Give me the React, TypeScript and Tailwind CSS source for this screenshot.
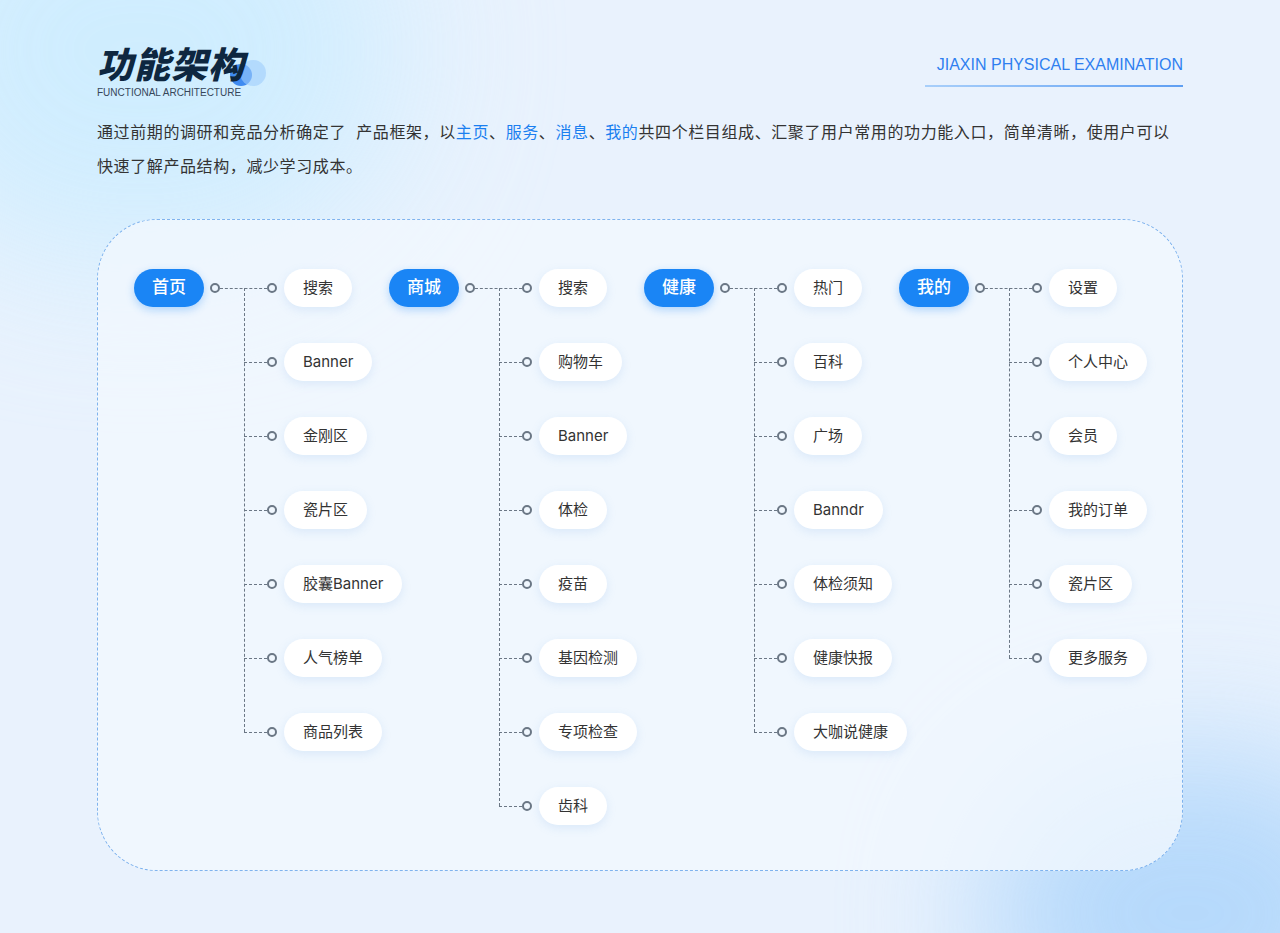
import React from "react";

const cols: { h: string; items: string[] }[] = [
  { h: "首页", items: ["搜索", "Banner", "金刚区", "瓷片区", "胶囊Banner", "人气榜单", "商品列表"] },
  { h: "商城", items: ["搜索", "购物车", "Banner", "体检", "疫苗", "基因检测", "专项检查", "齿科"] },
  { h: "健康", items: ["热门", "百科", "广场", "Banndr", "体检须知", "健康快报", "大咖说健康"] },
  { h: "我的", items: ["设置", "个人中心", "会员", "我的订单", "瓷片区", "更多服务"] },
];

const Dot = () => <div className="w-[10px] h-[10px] rounded-full border-2 border-[#6b7785] shrink-0" />;
const Dash = ({ w }: { w: string }) => <div className={`${w} shrink-0 border-t border-dashed border-[#6b7785]`} />;
const Pill = ({ t }: { t: string }) => (
  <div className="h-[38px] px-[19px] flex items-center rounded-full bg-white text-[15px] text-[#333] shadow-[0_3px_10px_rgba(120,170,230,0.18)] whitespace-nowrap">{t}</div>
);

export default function App() {
  return (
    <div className="relative w-[1280px] h-[933px] overflow-hidden bg-[#e9f2fd]" style={{ fontFamily: "Inter, 'Noto Sans CJK SC', sans-serif" }}>
      <div className="absolute -left-[120px] -top-[160px] w-[520px] h-[420px] rounded-full bg-[#c9ecff] blur-[80px] opacity-80" />
      <div className="absolute -right-[120px] -bottom-[140px] w-[420px] h-[320px] rounded-full bg-[#a9d3fb] blur-[70px] opacity-80" />
      <div className="relative px-[97px] pt-[44px]">
        <div className="flex justify-between items-start">
          <div className="relative">
            <div className="absolute left-[133px] top-[20px] w-[22px] h-[22px] rounded-full bg-[#2f7ff0] opacity-90" />
            <div className="absolute left-[143px] top-[16px] w-[26px] h-[26px] rounded-full bg-[#9fcdfb] opacity-60" />
            <div className="relative text-[36px] leading-[42px] font-black italic text-[#0e2740] tracking-[1px]">功能架构</div>
            <div className="text-[10px] text-[#36465a] -mt-[1px]" style={{ fontFamily: "'Liberation Sans', sans-serif" }}>FUNCTIONAL ARCHITECTURE</div>
          </div>
          <div className="w-[258px] flex flex-col items-end">
            <div className="text-[16px] text-[#2f7ff0] mt-[9px]" style={{ fontFamily: "'Liberation Sans', sans-serif" }}>JIAXIN PHYSICAL EXAMINATION</div>
            <div className="mt-[8px] w-full h-[2px] bg-gradient-to-r from-[#a8cffa] to-[#5f9ff2]" />
          </div>
        </div>
        <p className="mt-[15px] text-[16px] leading-[34px] text-[#333] tracking-[0.6px]">
          通过前期的调研和竞品分析确定了&nbsp; 产品框架，以<span className="text-[#1a7ff0]">主页</span>、<span className="text-[#1a7ff0]">服务</span>、<span className="text-[#1a7ff0]">消息</span>、<span className="text-[#1a7ff0]">我的</span>共四个栏目组成、汇聚了用户常用的功力能入口，简单清晰，使用户可以<br />快速了解产品结构，减少学习成本。
        </p>
        <div className="mt-[36px] h-[652px] rounded-[60px] border border-dashed border-[#7fb3ee] bg-[#f1f7fe]/80 pl-[36px] pt-[49px] flex items-start">
          {cols.map((c) => (
            <div key={c.h} className="relative w-[255px] shrink-0 flex flex-col gap-[36px]">
              <div className="absolute left-[110px] top-[19px] bottom-[19px] border-l border-dashed border-[#6b7785]" />
              <div className="flex items-center h-[38px]">
                <div className="w-[70px] h-[38px] rounded-full bg-[#1a85f5] text-white text-[17px] font-medium flex items-center justify-center shadow-[0_3px_8px_rgba(26,133,245,0.3)]">{c.h}</div>
                <div className="ml-[6px]"><Dot /></div>
                <Dash w="w-[47px]" />
                <Dot />
                <div className="ml-[7px]"><Pill t={c.items[0]} /></div>
              </div>
              {c.items.slice(1).map((it, i) => (
                <div key={i} className="flex items-center h-[38px] pl-[110px]">
                  <Dash w="w-[23px]" />
                  <Dot />
                  <div className="ml-[7px]"><Pill t={it} /></div>
                </div>
              ))}
            </div>
          ))}
        </div>
      </div>
    </div>
  );
}
